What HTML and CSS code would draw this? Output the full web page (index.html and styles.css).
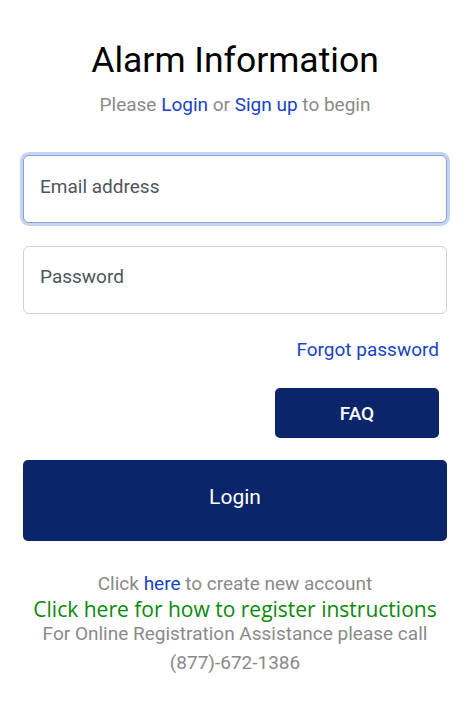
FILE: index.html
```html
<!DOCTYPE html>
<html lang="en">
<head>
<meta charset="utf-8">
<title>Alarm Information</title>
<link rel="stylesheet" href="styles.css">
</head>
<body>
<main class="page">
  <h1 class="title">Alarm Information</h1>
  <p class="subtitle">Please <a href="#" class="link">Login</a> or <a href="#" class="link">Sign up</a> to begin</p>
  <form class="form">
    <input class="field field-focus" type="email" placeholder="Email address">
    <input class="field" type="password" placeholder="Password">
    <div class="forgot-row"><a href="#" class="link forgot">Forgot password</a></div>
    <div class="faq-row"><button type="button" class="btn btn-faq">FAQ</button></div>
    <button type="button" class="btn btn-login">Login</button>
  </form>
  <div class="footer">
    <p class="foot-line">Click <a href="#" class="link">here</a> to create new account</p>
    <p class="green-line">Click here for how to register instructions</p>
    <p class="foot-line">For Online Registration Assistance please call</p>
    <p class="foot-line phone">(877)-672-1386</p>
  </div>
</main>
</body>
</html>
```
FILE: styles.css
```css
* { box-sizing: border-box; }
html, body { margin: 0; padding: 0; background: #ffffff; }
body { font-family: Roboto, "Liberation Sans", sans-serif; color: #212529; }
.page { padding: 0 23px; display: flex; flex-direction: column; }
.title { margin: 40px 0 0; font-size: 35.5px; font-weight: 400; line-height: 40px; text-align: center; color: #000; }
.subtitle { margin: 13px 0 0; text-align: center; font-size: 19px; line-height: 24px; color: #8a8a8a; }
.link { color: #1743c9; text-decoration: none; }
.form { display: flex; flex-direction: column; margin-top: 38px; }
.field { width: 100%; height: 68px; border: 1px solid #cfd3da; border-radius: 6px; padding: 0 16px 7px; font-family: inherit; font-size: 19px; color: #333; background: #fff; outline: none; }
.field::placeholder { color: #50545c; }
.field + .field { margin-top: 23px; }
.field-focus { border-color: #86a0de; box-shadow: 0 0 0 3px #c3d3f0; caret-color: #333; padding-bottom: 6px; }
.forgot-row { display: flex; justify-content: flex-end; padding-right: 8px; margin-top: 24px; }
.forgot { font-size: 19px; line-height: 24px; }
.faq-row { display: flex; justify-content: flex-end; padding-right: 8px; margin-top: 26px; }
.btn { border: none; background: #0a2569; color: #fff; font-family: inherit; border-radius: 5px; cursor: pointer; }
.btn-faq { width: 164px; height: 50px; font-size: 19px; font-weight: 500; }
.btn-login { margin-top: 22px; width: 100%; height: 81px; padding-bottom: 9px; font-size: 21px; font-weight: 400; }
.footer { margin-top: 30px; text-align: center; }
.footer p { margin: 0; }
.foot-line { font-size: 19px; line-height: 26px; color: #8a8a8a; }
.green-line { font-family: "Open Sans", Lato, sans-serif; font-size: 21px; line-height: 24px; color: #0a8a0a; }
.footer .phone { margin-top: 2px; line-height: 28px; }
```
